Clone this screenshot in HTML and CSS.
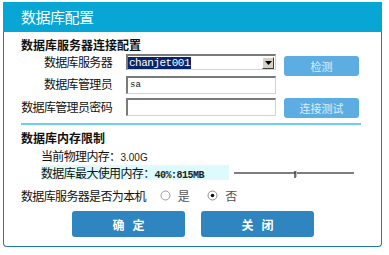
FILE: index.html
```html
<!DOCTYPE html>
<html lang="zh-CN">
<head>
    <meta charset="UTF-8">
    <title>数据库配置</title>
    <link rel="stylesheet" href="styles.css">
</head>
<body>
    <div class="dialog">
        <div class="title-bar">数据库配置</div>
        <div class="content">
            <h3 class="section-title">数据库服务器连接配置</h3>
            <div class="conn-grid">
                <label class="field-label">数据库服务器</label>
                <div class="select-box">
                    <span class="select-value">chanjet001</span>
                    <span class="select-arrow">
                        <svg width="7" height="4" viewBox="0 0 7 4"><path d="M0 0h7L3.5 4z" fill="#000"/></svg>
                    </span>
                </div>
                <button class="btn-light">检测</button>

                <label class="field-label">数据库管理员</label>
                <div class="text-box">sa</div>
                <span></span>

                <label class="field-label">数据库管理员密码</label>
                <div class="text-box"></div>
                <button class="btn-light btn-test">连接测试</button>
            </div>

            <div class="divider"></div>

            <h3 class="section-title">数据库内存限制</h3>
            <div class="mem-row">当前物理内存：<span class="num">3.00G</span></div>
            <div class="mem-row mem-max">
                <span class="mem-label">数据库最大使用内存：<span class="num bold">40%:815MB</span></span>
                <svg class="slider" width="122" height="10" viewBox="0 0 122 10">
                    <line x1="0" y1="5" x2="120" y2="5" stroke="#7d7d7d" stroke-width="2"/>
                    <path d="M61 3v7" stroke="#444" stroke-width="1.5"/>
                    <path d="M62.5 3v6" stroke="#bbb" stroke-width="1"/>
                </svg>
            </div>

            <div class="radio-row">
                <span>数据库服务器是否为本机</span>
                <span class="radio">
                    <svg width="11" height="11" viewBox="0 0 11 11"><circle cx="5.5" cy="5.5" r="4.5" fill="#fff" stroke="#9a9a9a"/></svg>
                    <span class="radio-text">是</span>
                </span>
                <span class="radio">
                    <svg width="11" height="11" viewBox="0 0 11 11"><circle cx="5.5" cy="5.5" r="4.5" fill="#fff" stroke="#8a8a8a"/><circle cx="5.5" cy="5.5" r="1.8" fill="#111"/></svg>
                    <span class="radio-text">否</span>
                </span>
            </div>

            <div class="actions">
                <button class="btn-dark">确&nbsp;&nbsp;&nbsp;定</button>
                <button class="btn-dark">关&nbsp;&nbsp;&nbsp;闭</button>
            </div>
        </div>
    </div>
</body>
</html>
```

FILE: styles.css
```css
body {
    margin: 0;
    background: #ffffff;
    font-family: "Noto Sans CJK SC", "Liberation Sans", sans-serif;
    font-size: 12px;
    letter-spacing: -0.65px;
    color: #111;
}
.dialog {
    width: 377px;
    height: 244px;
    margin: 2px 0 0 3px;
    border: 1px solid #1b7fa5;
    border-top: none;
    border-radius: 0 0 4px 4px;
}
.title-bar {
    height: 30px;
    margin: 0 -1px;
    padding-left: 18px;
    background: #07a6d4;
    color: #ffffff;
    font-size: 15px;
    line-height: 30px;
    letter-spacing: -0.5px;
}
.content {
    padding-left: 17px;
}
.section-title {
    margin: 0;
    font-size: 12px;
    font-weight: bold;
    height: 20px;
    line-height: 20px;
    letter-spacing: 0;
}
.section-title:first-child {
    margin-top: 3px;
}
.conn-grid {
    display: grid;
    grid-template-columns: 97px 150px 75px;
    grid-auto-rows: 22px;
    column-gap: 8px;
    margin-top: -1px;
}
.field-label {
    text-align: right;
    padding-right: 6px;
    line-height: 16px;
    white-space: nowrap;
}
.conn-grid .field-label:nth-child(7) {
    line-height: 18px;
}
.select-box {
    height: 16px;
    box-sizing: border-box;
    border-top: 2px solid #7a7a7a;
    border-left: 2px solid #7a7a7a;
    border-bottom: 1px solid #d6d3ce;
    border-right: 1px solid #d6d3ce;
    display: flex;
    align-items: center;
    justify-content: space-between;
    background: #fff;
}
.select-value {
    background: #0a246a;
    color: #fff;
    font-family: "Liberation Mono", monospace;
    font-size: 11px;
    line-height: 12px;
    padding: 0 1px;
    letter-spacing: -0.5px;
}
.select-arrow {
    width: 12px;
    height: 12px;
    background: #d4d0c8;
    border: 1px solid;
    border-color: #fff #404040 #404040 #fff;
    box-sizing: border-box;
    display: flex;
    align-items: center;
    justify-content: center;
    margin-right: 1px;
}
.text-box {
    height: 18px;
    box-sizing: border-box;
    border-top: 2px solid #7a7a7a;
    border-left: 2px solid #7a7a7a;
    border-bottom: 1px solid #d6d3ce;
    border-right: 1px solid #d6d3ce;
    font-family: "Liberation Mono", monospace;
    font-size: 9px;
    line-height: 14px;
    padding-left: 2px;
    letter-spacing: 0;
    background: #fff;
}
.btn-light, .btn-dark {
    border: none;
    font-family: "Noto Sans CJK SC", sans-serif;
    padding: 0;
    cursor: pointer;
}
.btn-light {
    width: 75px;
    height: 20px;
    margin-top: 2px;
    background: #5dade2;
    color: #dceef9;
    font-size: 11px;
    border-radius: 3px;
}
.btn-light.btn-test {
    margin-top: 0;
}
.divider {
    width: 340px;
    height: 2px;
    background: #6ccfec;
    margin-top: 3px;
}
.divider + .section-title {
    margin-top: 3px;
}
.mem-row {
    padding-left: 20px;
    height: 20px;
    line-height: 20px;
    margin-top: -2px;
}
.num {
    font-family: "Liberation Sans", sans-serif;
    font-size: 10px;
    letter-spacing: 0;
    color: #222;
}
.num.bold {
    font-family: "Liberation Mono", monospace;
    font-weight: bold;
    letter-spacing: -0.5px;
}
.mem-max {
    display: flex;
    align-items: center;
    height: 15px;
    margin-top: -1px;
}
.mem-label {
    background: #ddfbfc;
    width: 188px;
    height: 15px;
    line-height: 15px;
    white-space: nowrap;
}
.slider {
    margin-left: 5px;
}
.radio-row {
    display: flex;
    align-items: center;
    height: 22px;
    margin-top: 4px;
}
.radio {
    display: flex;
    align-items: center;
    color: #555;
}
.radio:nth-child(2) {
    margin-left: 14px;
}
.radio:nth-child(3) {
    margin-left: 18px;
}
.radio-text {
    margin-left: 7px;
}
.actions {
    display: flex;
    gap: 16px;
    margin: 5px 0 0 51px;
}
.btn-dark {
    width: 113px;
    height: 26px;
    background: #2e85c0;
    color: #ffffff;
    font-size: 12px;
    font-weight: bold;
    letter-spacing: 0;
    border-radius: 3px;
}
```
